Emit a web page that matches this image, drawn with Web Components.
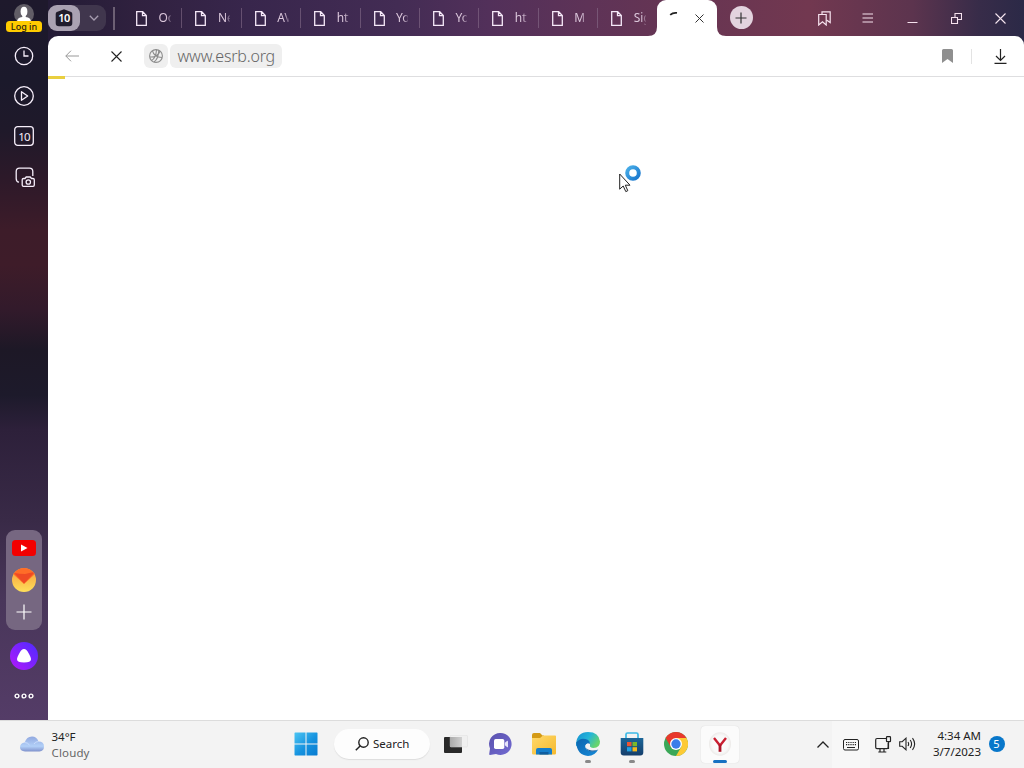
<!DOCTYPE html>
<html lang="en"><head><meta charset="utf-8"><title>www.esrb.org</title>
<style>
html,body{margin:0;width:1024px;height:768px;overflow:hidden;background:#fff;font-family:"Noto Sans","Open Sans",sans-serif}
</style></head><body>
<desktop-screen></desktop-screen>
<script>
const ICONS={
file:['11 15','<path d="M.7.7h6l3.6 3.8v9.8H.7zM6.5.7v4h4" fill="none" stroke="#f5e8f8" stroke-width="1.3"/>'],
chev:['10 6','<path d="M.8.8 5 5 9.2.8" fill="none" stroke="#a79db0" stroke-width="1.3"/>'],
tabs:['18 18','<path d="M9 .3 16.2 3Q17.3 3.5 17.3 5v9q0 3.2-3.2 3.2H4Q.7 17.2.7 14V5Q.7 3.5 1.8 3z" fill="#201c2c"/>'],
spinner:['16 16','<path d="M5.2 4.800Q8 2.300 12 2.900" fill="none" stroke="#222" stroke-width="1.800"/>'],
x9:['9 9','<path d="m.5.5 8 8m0-8-8 8" stroke="#333" stroke-width="1"/>'],
x11:['11 11','<path d="m.5.5 10 10m0-10-10 10" stroke="#222" stroke-width="1.1"/>'],
xw:['11 11','<path d="m.5.5 10 10m0-10-10 10" stroke="#f6e6f0" stroke-width="1.1"/>'],
back:['14 12','<path d="M14 6H.8M6 .7.8 6 6 11.3" fill="none" stroke="#999" stroke-width="1"/>'],
globe:['14 14','<g fill="none" stroke="#8c8c8c" stroke-width="1.1"><circle cx="7" cy="7" r="6.400"/><path d="M.8 8Q8.500 8.500 11 2.200M3.500 1.800Q5 8 13 8.500M2.500 11.500Q7 9 7.500.700M5 13Q9.500 10 9.800 1.300"/></g>'],
plus:['12 12','<path d="M6 .5v11M.5 6h11" stroke="#333" stroke-width="1.2"/>'],
marks:['13 15','<g fill="none" stroke="#f6e2ee" stroke-width="1.2"><path d="M.7 3.500h7.500v10.500L4.500 10.800.7 14z"/><path d="M4 3.300V.8h8.200v10.700L8.500 9"/></g>'],
menu:['12 10','<path d="M.5 1h10.5M.5 5h10.5M.5 9h10.5" stroke="#f6e2ee" stroke-width="1.2"/>'],
min:['11 10','<path d="M.5 9.500h10" stroke="#f6e2ee"/>'],
restore:['11 11','<path d="M.5 4.500h6v6h-6zM4 4.500V.5h6.500v6h-4" fill="none" stroke="#f6e2ee" stroke-width="1.1"/>'],
bookmark:['11 14','<path d="M0 1.500Q0 0 1.500 0h8Q11 0 11 1.500V14L5.500 10 0 14z" fill="#8f8f8f"/>'],
down:['13 15','<path d="M6.500 0v11M2 7l4.500 4.500L11 7M.5 14.300h12" fill="none" stroke="#222" stroke-width="1.2"/>'],
avatar:['20 20','<circle cx="10" cy="10" r="10" fill="#615d66"/><ellipse cx="10" cy="7.500" rx="3.400" ry="4.700" fill="#fff"/><path d="M8.300 10h3.400v3Q17 13.500 17 18H3q0-4.500 5.300-5z" fill="#fff"/>'],
clock:['20 20','<g fill="none" stroke="#f7effb" stroke-width="1.3"><circle cx="10" cy="10" r="8.700"/><path d="M10 4.500V10h4.500"/></g>'],
play:['20 20','<g fill="none" stroke="#f7effb" stroke-width="1.3" stroke-linejoin="round"><circle cx="10" cy="10" r="9.300"/><path d="m7.500 5.700 6.200 4.300-6.200 4.300z"/></g>'],
ten:['20 20','<rect x=".7" y=".7" width="18.6" height="18.6" rx="3" fill="none" stroke="#f7effb" stroke-width="1.3"/>'],
shot:['20 20','<g fill="none" stroke="#f7effb" stroke-width="1.3"><path d="M4 15.200Q1.200 14.800 1.200 11.500V4.500q0-3.300 3.300-3.300h10q3.300 0 3.300 3.300V9"/><path d="M8.500 11.500H10L11.200 10h4L16.500 11.500H18q1.300 0 1.300 1.300v5.200q0 1.300-1.300 1.300H8.500q-1.300 0-1.300-1.300v-5.200q0-1.300 1.300-1.300z"/><circle cx="13.300" cy="15" r="2.200"/></g>'],
youtube:['24 16','<rect width="24" height="16" rx="3.5" fill="#f20000"/><path d="m9 4.500 6.500 3.500L9 11.500z" fill="#fff"/>'],
mail:['24 24','<defs><linearGradient id="m" x2="0" y2="1"><stop stop-color="#f59a3c"/><stop offset="1" stop-color="#ffe05a"/></linearGradient><clipPath id="c"><circle cx="12" cy="12" r="12"/></clipPath></defs><g clip-path="url(#c)"><path fill="url(#m)" d="M0 0h24v24H0z"/><path d="M0 5 4 0h16l4 5-12 11z" fill="#ff6c28"/><path d="M2 5 12 15.500 23 4q-4 .5-10 2-5 0-11-1z" fill="#ef4a24"/></g>'],
add:['16 16','<path d="M8 .5v15M.5 8h15" stroke="#fff" stroke-width="1.2"/>'],
alice:['28 28','<defs><linearGradient id="a" x1="1" x2="0" y2="1"><stop stop-color="#4c2cff"/><stop offset="1" stop-color="#b317fb"/></linearGradient></defs><circle cx="14" cy="14" r="14" fill="url(#a)"/><path d="M14 7q2.500 0 4.500 4Q21 15.500 21 17.200 21 20.500 14 20.500T7 17.200Q7 15.500 9.500 11 11.500 7 14 7z" fill="#fff"/>'],
dots:['20 6','<g fill="none" stroke="#fff" stroke-width="1.4"><circle cx="3" cy="3" r="1.900"/><circle cx="10" cy="3" r="1.900"/><circle cx="17" cy="3" r="1.900"/></g>'],
cloud:['24 16','<defs><linearGradient id="d" x2="0" y2="1"><stop stop-color="#91a8df"/><stop offset=".65" stop-color="#b2d0f8"/><stop offset="1" stop-color="#8092cc"/></linearGradient></defs><path d="M5 15.500Q0 15 0 11.200 0 7.300 4.700 6.500 6.500.5 12 .5q4.700 0 6.500 5 5.500 0 5.500 5 0 4.500-4.500 5z" fill="url(#d)"/><path d="M4.700 6.500q3 0 4.800 2.500M18.500 5.500q-3.500 0-4.500 2.500" fill="none" stroke="#d0e2ff" stroke-width=".8"/>'],
start:['24 24','<defs><linearGradient id="w" x2="1" y2="1"><stop stop-color="#4cc5f3"/><stop offset=".55" stop-color="#1592df"/><stop offset="1" stop-color="#087bd0"/></linearGradient></defs><path d="M1 .5h10.500v11H.5V1zM12.500.5H23l.5.5v10.500h-11zM.5 12.500h11v11H1l-.5-.5zM12.500 12.500h11V23l-.5.5H12.500z" fill="url(#w)"/>'],
lens:['14 14','<circle cx="8.500" cy="5.500" r="4.700" fill="none" stroke="#222" stroke-width="1.4"/><path d="M5.100 9 .8 13.300" stroke="#222" stroke-width="1.5"/>'],
task:['24 18','<defs><linearGradient id="t" x2="1"><stop stop-color="#aaa"/><stop offset="1" stop-color="#d0d0d0"/></linearGradient></defs><rect y="2" width="18" height="16" rx="1" fill="#292929"/><rect x="6.200" y=".3" width="17.300" height="11.700" rx="1" fill="#f0f0f0" stroke="#ddd" stroke-width=".5"/><path d="M6 2h12v10H7q-1 0-1-1z" fill="url(#t)"/>'],
chat:['24 24','<defs><linearGradient id="h" x2="1" y2="1"><stop stop-color="#5b52ae"/><stop offset="1" stop-color="#716ad1"/></linearGradient></defs><path d="M12.500 1A11 11 0 1 1 8 22L2 23q-1 0-.8-1L2 16.500A11 11 0 0 1 12.500 1z" fill="url(#h)"/><rect x="6" y="7" width="10.3" height="10" rx="1.7" fill="#fff"/><path d="m16.800 10.800 2.500-2Q20 8.500 20 9.200v5.600q0 .8-.7.400l-2.500-2z" fill="#e4e3fa"/>'],
folder:['24 22','<defs><linearGradient id="f" x2="1" y2="1"><stop stop-color="#ffd96b"/><stop offset="1" stop-color="#f5b92e"/></linearGradient></defs><path d="M0 2Q0 0 2 0h6l2.500 2.500H12V10H0z" fill="#d49a15"/><path d="M0 5h8l3-2.500h12.200q.8 0 .8.800V20.200q0 1.300-1.300 1.300H1.300Q0 21.500 0 20.200z" fill="url(#f)"/><path d="M4 21.500V17q0-2 2-2h12q2 0 2 2v4.500z" fill="#147dca"/><path d="M7.500 19h9v2.500h-9z" fill="#0e5c9e"/>'],
edge:['24 24','<defs><linearGradient id="e" x2="1" y2=".5"><stop stop-color="#168ed2"/><stop offset=".55" stop-color="#24b5d8"/><stop offset="1" stop-color="#66d46c"/></linearGradient><linearGradient id="g" x2="1" y2="1"><stop stop-color="#0c65af"/><stop offset="1" stop-color="#168ad8"/></linearGradient></defs><path d="M0 12Q1 0 12 0q11 0 12 9.500 0 6.500-6.500 6.500-4 0-3.500-2.500.5-4-4-4-6 0-10 5z" fill="url(#e)"/><path d="M.2 10.500Q4 5.500 9.500 7q5 1.300 4.300 5-3-1.300-4.300 1.300-1.200 4 4.500 5.700 5 1 8.300-1.700Q19 24 12 24 1 23 .2 10.500z" fill="url(#g)"/><path d="M10 13q-1 4 3.500 6 4.500 1.600 8.700-1.400-2 .6-4.500.3Q10.500 17 10 13z" fill="#155a9b"/><path d="M13.800 12q-3-1.500-4.300 1.300-.8 3.700 5 5 4.500.8 7.700-1 .8-1.600-.7-1-4.300 1.500-7.500-1.300-.7-.9-.2-3z" fill="#f3f3f3"/>'],
store:['24 24','<defs><linearGradient id="s" x2="0" y2="1"><stop stop-color="#1b6699"/><stop offset="1" stop-color="#153e6b"/></linearGradient></defs><path d="M6 7V2.500Q6 1 7.500 1h9Q18 1 18 2.500V7" fill="none" stroke="#3cb9e6" stroke-width="1.7"/><path d="M.7 6h22.600v14.500q0 3-3 3H3.700q-3 0-3-3z" fill="url(#s)"/><path d="M7 10h4.500v4.200H7z" fill="#ed5431"/><path d="M12.500 10H17v4.200h-4.500z" fill="#79b82a"/><path d="M7 15.200h4.500v4.200H7z" fill="#20a0e4"/><path d="M12.500 15.200H17v4.200h-4.500z" fill="#f5b81c"/>'],
chrome:['24 24','<circle cx="12" cy="12" r="12" fill="#3aa757"/><path d="M1.600 6A12 12 0 0 1 22.400 6L12 6.500 6.800 15z" fill="#e8382c"/><path d="M22.400 6A12 12 0 0 1 12 24l5.200-9Q18 9.500 12 6z" fill="#fdca35"/><circle cx="12" cy="12" r="6" fill="#fff"/><circle cx="12" cy="12" r="4.700" fill="#397de9"/>'],
yandex:['22 24','<defs><radialGradient id="y"><stop stop-color="#fff"/><stop offset=".75" stop-color="#f8f8f8"/><stop offset="1" stop-color="#eceae8"/></radialGradient></defs><ellipse cx="11" cy="12" rx="11" ry="11.7" fill="url(#y)"/><path d="m5 6 6 7.500L17 6" fill="none" stroke="#c91f31" stroke-width="2.4"/><path d="M11 12.500v7.300" stroke="#ad1528" stroke-width="2.8"/>'],
up:['12 7','<path d="m.5 6.500 5.500-5.500 5.500 5.500" fill="none" stroke="#222" stroke-width="1.3"/>'],
keys:['16 12','<rect x=".5" y=".5" width="15" height="10.5" rx="1.5" fill="none" stroke="#222"/><path d="M3 3.500h10M3 5.700h10" stroke="#222" stroke-width="1.2" stroke-dasharray="1.2 1"/><path d="M4 8.500h8" stroke="#222"/>'],
net:['17 17','<g fill="none" stroke="#222" stroke-width="1.2"><path d="M11 2.500H2Q.7 2.500.7 4v7.300q0 1.300 1.300 1.300h10q1.200 0 1.200-1.300V7M5 13v3m4-3v3M3.300 16h8"/><rect x="11.500" y=".7" width="4" height="5" rx=".7"/><path d="M13.500 6v7"/></g>'],
vol:['17 14','<g fill="none" stroke="#222" stroke-width="1.1"><path d="M.7 4.700h2.500L7 1.200v11.600L3.200 9.300H.7z"/><path d="M9 5q1.300 2 0 4M11.200 3q2.800 4 0 8M13.500 1.200q4.300 5.800 0 11.600"/></g>'],
pointer:['12 20','<path d="M.7 1v15.200l3.500-3.200 2.600 5.600 2-.9-2.500-5.500H11z" fill="#fff" stroke="#222"/>'],
busy:['16 16','<defs><linearGradient id="b" x2="1" y2="1"><stop stop-color="#49aee8"/><stop offset="1" stop-color="#1976cd"/></linearGradient></defs><circle cx="8" cy="8" r="5.8" fill="#fff" stroke="url(#b)" stroke-width="4"/>'],
corner:['10 10','<path d="M10 0v10H0Q10 10 10 0z" fill="#fff"/>']
};
const i=(n,s='')=>`<ui-icon name="${n}" style="${s}"></ui-icon>`;
class Base extends HTMLElement{
  connectedCallback(){ if(!this.shadowRoot) this.attachShadow({mode:'open'}).innerHTML=this.render(); }
}
const def=(n,render)=>customElements.define(n,class extends Base{render(){return render(this)}});
def('ui-icon',e=>{const [b,p]=ICONS[e.getAttribute('name')],[w,h]=b.split(' ');
 return `<style>:host{display:block;flex:none;width:${w}px;height:${h}px}svg{display:block;width:100%;height:100%}</style><svg viewBox="0 0 ${w} ${h}" aria-hidden="true">${p}</svg>`});

def('browser-tab',()=>`<style>:host{display:flex;box-sizing:border-box;flex:0 0 59.4px;height:36px;align-items:center;padding-left:13px;background:linear-gradient(#8d749088,#8d749088) right center/1px 20px no-repeat}
:host([last]){background:none}
span{margin-left:11.5px;width:12px;overflow:hidden;white-space:nowrap;font-size:12px;line-height:20px;color:#dcc8dc;-webkit-mask:linear-gradient(90deg,#000 60%,#0003)}</style>${i('file')}<span><slot></slot></span>`);

def('tab-strip',()=>`<style>:host{display:flex;height:36px;grid-column:2;grid-row:1;align-items:center;background:linear-gradient(90deg,#231b35 0,#30213f 90px,#38264c 200px,#432c54 350px,#52305a 440px,#5e3357 540px,#683552 650px,#723850 760px,#5c344e 865px,#382c49 930px,#2b2947 976px)}
.group{display:flex;width:58px;height:26px;border-radius:9px;background:#40364d;flex:none}
.count{display:grid;place-items:center;width:32px;border-radius:9px;background:#aaa2b2}
.count>*{grid-area:1/1}.count b{z-index:1;color:#fff;font-size:11px;line-height:16px;letter-spacing:-.5px;font-weight:600}
.drop{display:grid;place-items:center;flex:1;padding-left:2px}
.bar{width:2px;height:23px;background:#6d6074;margin:0 8px 0 7px;flex:none}
.active{display:flex;align-items:center;position:relative;box-sizing:border-box;width:60px;height:36px;background:#fff;border-radius:9px 9px 0 0;padding:0 12.5px 0 8px;justify-content:space-between;flex:none;margin-left:-1px}
.new{display:grid;place-items:center;width:23px;height:23px;border-radius:50%;background:#e3d3de;margin-left:13px;margin-top:-1px;flex:none}
.win{display:flex;margin-left:auto;margin-right:2px}.win div{width:44px;height:35px;display:grid;place-items:center}</style>
<div class="group"><div class="count">${i('tabs')}<b>10</b></div><div class="drop">${i('chev')}</div></div><div class="bar"></div>
${['Oops','New','AVG','https','You','You','https','Mic'].map(t=>`<browser-tab>${t}</browser-tab>`).join('')}<browser-tab last>Sign</browser-tab>
<div class="active">${i('corner','width:9px;height:9px;position:absolute;bottom:0;left:-9px')}${i('spinner')}${i('x9')}${i('corner','width:9px;height:9px;position:absolute;bottom:0;right:-9px;transform:scaleX(-1)')}</div>
<div class="new">${i('plus')}</div>
<div class="win"><div>${i('marks')}</div><div>${i('menu')}</div><div>${i('min')}</div><div>${i('restore')}</div><div>${i('xw')}</div></div>`);

def('address-bar',()=>`<style>:host{display:flex;box-sizing:border-box;height:41px;padding:0 17px 0 16.5px;align-items:center;background:#fff;border-radius:10px 9px 0 0;border-bottom:1px solid #dedee0}
.g{display:grid;place-items:center;width:24px;height:24px;border-radius:6px;background:#efefef;margin-left:22px}
.u{box-sizing:border-box;width:112px;height:24px;padding-left:8px;margin-left:2px;border-radius:6px;background:#efefef;color:#666;font-weight:300;font-size:16px;letter-spacing:-.2px;line-height:25px;white-space:nowrap}
.s{width:1px;height:15px;background:#e3e3e3;margin:0 22px 0 18.5px}</style>
${i('back')}${i('x11','margin-left:32px')}<div class="g">${i('globe')}</div><div class="u"><slot></slot></div>${i('bookmark','margin-left:auto')}<div class="s"></div>${i('down')}`);

def('page-view',()=>`<style>:host{display:block;background:linear-gradient(#241b36,#241b36) left top/20px 20px no-repeat,linear-gradient(#2b2947,#2b2947) right top/20px 20px no-repeat,#fff;grid-column:2;grid-row:2}
.page{display:flow-root;background:#fff;height:643px}.load{width:17px;height:3px;background:#e9cf3f;position:relative;top:-1px}</style><address-bar>www.esrb.org</address-bar><div class="page"><div class="load"></div></div>`);

def('side-bar',()=>`<style>:host{display:flex;flex-direction:column;align-items:center;grid-column:1;grid-row:1/3;background:linear-gradient(#1e192c 0,#1b192b 80px,#1f192a 130px,#2d1929 180px,#3d1c29 230px,#3e1c29 265px,#321a2b 310px,#1d1826 350px,#1d1a2b 395px,#2d203a 430px,#392a47 520px,#49365a 600px,#543c67 720px)}
.av{height:35px;padding-top:4px;box-sizing:border-box;position:relative;width:48px;display:flex;flex-direction:column;align-items:center}
.log{position:absolute;top:21px;left:6px;width:36px;height:11px;border-radius:3.5px;background:#fc0;color:#2a2110;font-size:9px;line-height:11px;text-align:center;font-weight:500;white-space:nowrap}
.c{height:40px;display:grid;place-items:center;flex:none}.c>*{grid-area:1/1}.c span{color:#f7effb;font-size:11.5px;line-height:16px;letter-spacing:-.8px;padding-top:1px}
.panel{box-sizing:border-box;width:36px;height:100px;padding:10px 0 9px;margin-top:334px;border-radius:9px;background:#766781;display:flex;flex-direction:column;align-items:center}
</style><div class="av">${i('avatar')}<span class="log">Log in</span></div>
<div class="c" style="margin-top:1px">${i('clock')}</div><div class="c">${i('play')}</div><div class="c">${i('ten')}<span>10</span></div><div class="c">${i('shot','margin-left:1px;margin-top:1px')}</div>
<div class="panel">${i('youtube')}${i('mail','margin-top:12px')}${i('add','margin:12px 1px 0 0')}</div><div class="c" style="margin-top:6px">${i('alice')}</div><div class="c">${i('dots')}</div>`);

def('task-app',()=>`<style>:host{display:flex;flex-direction:column;align-items:center;position:relative;width:44px;height:47px}
:host([on])::before{content:"";position:absolute;inset:5px 3px 5px;border-radius:4px;background:#fbfbfb;box-shadow:0 0 1px #ccc}
div{height:46px;display:grid;place-items:center;position:relative}
:host([run])::after{content:"";position:absolute;bottom:5px;width:6px;height:3px;border-radius:2px;background:#898989}:host([on])::after{width:14px;background:#1671c2}</style><div><slot></slot></div>`);

def('task-bar',()=>`<style>:host{display:grid;grid-template-columns:283.5px 458.500px 1fr;height:48px;box-sizing:border-box;border-top:1px solid #dcdcdc;background:#f3f3f3;grid-column:1/3;grid-row:3;color:#222;font-size:11.5px;line-height:16px}
.w{display:flex;align-items:center;height:46px;padding-left:20px}.w p,.t p{margin:0;white-space:nowrap}.w section{margin-left:7.5px;padding-top:1px}.w .g{color:#666;letter-spacing:.15px}
.a{display:flex}.search{box-sizing:border-box;width:96px;height:30px;margin:8px 4px 0 6px;border-radius:15px;background:#fdfdfd;box-shadow:0 1px 1px #ddd;display:flex;align-items:center;padding-left:21px;gap:4.5px;white-space:nowrap}
.r{display:flex;align-items:center;height:46px;padding-left:75px}.t{text-align:right;width:49px;margin-left:16px}.t p{display:flex;justify-content:flex-end}
.badge{display:grid;place-items:center;width:16px;height:16px;border-radius:50%;background:#0877ca;color:#fff;font-size:11px;margin-left:7.5px;flex:none}
.kb{display:grid;place-items:center;height:47px;margin-top:1px;width:38px;margin-left:3px;background:#f7f7f7}</style>
<div class="w">${i('cloud')}<section><p>34°F</p><p class="g">Cloudy</p></section></div>
<div class="a"><task-app>${i('start')}</task-app><div class="search">${i('lens')}<span>Search</span></div><task-app>${i('task')}</task-app><task-app>${i('chat')}</task-app><task-app>${i('folder')}</task-app><task-app run>${i('edge')}</task-app><task-app run>${i('store')}</task-app><task-app>${i('chrome')}</task-app><task-app run on>${i('yandex')}</task-app></div>
<div class="r">${i('up')}<div class="kb">${i('keys')}</div>${i('net','margin-left:5px')}${i('vol','margin-left:7px')}<div class="t"><p>4:34 AM</p><p>3/7/2023</p></div><div class="badge">5</div></div>`);

def('desktop-screen',()=>`<style>:host{display:grid;position:relative;width:1024px;height:768px;grid-template:36px 684px 48px/48px 976px}
.p{position:absolute;left:619px;top:173px}.b{position:absolute;left:625px;top:165px}</style>
<tab-strip></tab-strip><side-bar></side-bar><page-view></page-view><task-bar></task-bar><div class="p">${i('pointer')}</div><div class="b">${i('busy')}</div>`);
</script></body></html>
